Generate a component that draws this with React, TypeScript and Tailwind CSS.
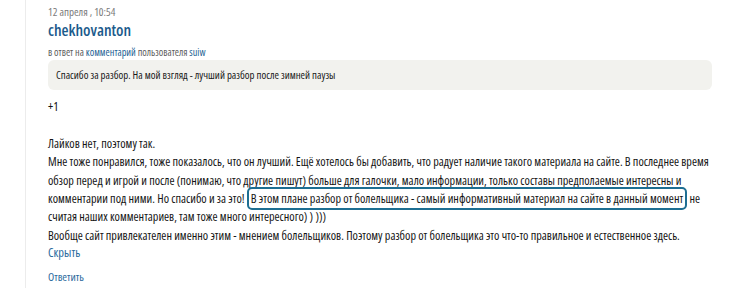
const font = "font-['Open_Sans',sans-serif] [font-stretch:condensed]";

export default function App() {
  return (
    <div className={`min-h-screen bg-white ${font}`}>
      <div className="ml-[25px] flex min-h-[288px] flex-col border-l border-[#ececec] pl-[22px] pr-[14px] pt-[4px]">
        <div className="text-[11px] leading-[16px] text-[#7a7a7a]">12 апреля , 10:54</div>
        <a className="text-[16px] font-semibold leading-[20px] text-[#1c5b8c]">chekhovanton</a>
        <div className="mt-[4px] text-[10.2px] leading-[16px] text-[#5c5c5c]">
          в ответ на <a className="text-[#245f93]">комментарий</a> пользователя{" "}
          <a className="text-[#245f93]">suiw</a>
        </div>
        <div className="mr-[4px] rounded-[6px] bg-[#f2f2ee] px-[8px] py-[7px] text-[10.8px] leading-[16px] text-[#1a1a1a]">
          Спасибо за разбор. На мой взгляд - лучший разбор после зимней паузы
        </div>
        <div className="mt-[8px] text-[12.2px] font-medium leading-[18.4px] text-[#151515]">
          <p>+1</p>
          <p>&nbsp;</p>
          <p>Лайков нет, поэтому так.</p>
          <p>
            Мне тоже понравился, тоже показалось, что он лучший. Ещё хотелось бы добавить, что радует наличие
            такого материала на сайте. В последнее время обзор перед и игрой и после (понимаю, что другие пишут)
            больше для галочки, мало информации, только составы предполаемые интересны и комментарии под ними. Но
            спасибо и за это!{" "}
            <span className="whitespace-nowrap rounded-[5px] border-2 border-[#1d6e92] px-[2px] py-[1px]">
              В этом плане разбор от болельщика - самый информативный материал на сайте в данный момент
            </span>{" "}
            не считая наших комментариев, там тоже много интересного) ) )))
          </p>
          <p>
            Вообще сайт привлекателен именно этим - мнением болельщиков. Поэтому разбор от болельщика это что-то
            правильное и естественное здесь.
          </p>
        </div>
        <a className="text-[12.5px] leading-[16px] text-[#2b6a9d]">Скрыть</a>
        <a className="mt-[8px] text-[11.4px] leading-[16px] text-[#2b6a9d]">Ответить</a>
      </div>
    </div>
  );
}
